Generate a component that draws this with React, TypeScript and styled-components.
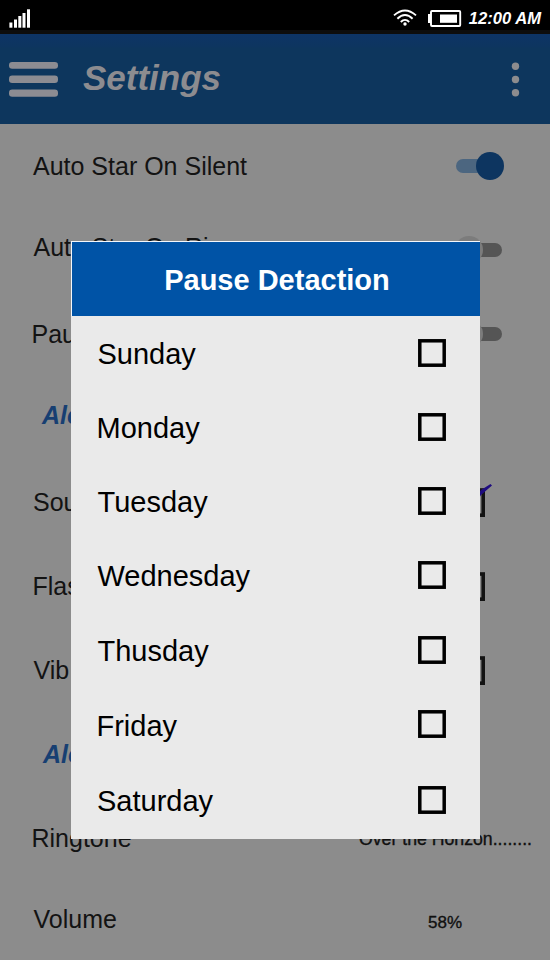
import React from 'react';
import styled, { createGlobalStyle } from 'styled-components';

const Global = createGlobalStyle`
  *, *::before, *::after { box-sizing: border-box; }
  body { margin: 0; background: #8c8c8c; font-family: 'Liberation Sans', Arial, sans-serif; }
`;

const Screen = styled.div`
  position: relative;
  width: 550px;
  height: 960px;
  overflow: hidden;
  background: #8c8c8c;
`;

const StatusBar = styled.div`
  display: flex;
  align-items: flex-start;
  justify-content: space-between;
  height: 34px;
  padding: 8px 9px 0 9px;
  background: #000;
  border-bottom: 4px solid #0d0d0d;
  svg { display: block; }
`;

const StatusGroup = styled.div`
  display: flex;
  align-items: flex-start;
  gap: 11px;
`;

const Clock = styled.span`
  margin-left: -4px;
  color: #fff;
  font: italic bold 16.6px/22px 'Liberation Sans', Arial, sans-serif;
  white-space: nowrap;
`;

const Header = styled.header`
  display: flex;
  align-items: center;
  height: 90px;
  padding: 0 30px 0 9px;
  background: linear-gradient(#0d3466 0, #0d355f 13px, #0d365d 14px);
  svg { display: block; }
`;

const Title = styled.h1`
  flex: 1;
  margin: 0 0 2px 25px;
  color: #8c8c90;
  font-size: 35px;
  line-height: 40px;
  font-style: italic;
  font-weight: bold;
`;

const List = styled.main`
  padding-top: 22px;
`;

const Row = styled.div<{ $gap: number; $left: number; $right?: number }>`
  display: flex;
  align-items: center;
  justify-content: space-between;
  height: 40px;
  margin-top: ${p => p.$gap}px;
  padding-left: ${p => p.$left}px;
  padding-right: ${p => p.$right ?? 46}px;
  svg { display: block; overflow: visible; }
`;

const Label = styled.span<{ $section?: boolean }>`
  color: ${p => (p.$section ? '#173f72' : '#131313')};
  font-size: 25px;
  line-height: 40px;
  font-weight: ${p => (p.$section ? 'bold' : 'normal')};
  font-style: ${p => (p.$section ? 'italic' : 'normal')};
  white-space: nowrap;
`;

const Value = styled.span<{ $shift: number; $size: number }>`
  padding-top: ${p => p.$shift}px;
  color: #101010;
  font-size: ${p => p.$size}px;
  -webkit-text-stroke: 0.35px #101010;
  white-space: nowrap;
`;

const Lowered = styled.div`
  padding-top: 6px;
`;

const Dialog = styled.section`
  position: absolute;
  left: 71px;
  top: 241px;
  width: 409px;
  height: 598px;
  background: #eaeaea;
`;

const DialogTitle = styled.h2`
  height: 75px;
  margin: 0;
  padding-left: 2px;
  border: solid #f4f7fb;
  border-width: 1px 0 0 1px;
  background: #0053a6;
  color: #fff;
  font-size: 29px;
  line-height: 76px;
  text-align: center;
  white-space: nowrap;
`;

const DayRow = styled.label<{ $height: number; $left: number }>`
  display: flex;
  align-items: center;
  justify-content: space-between;
  height: ${p => p.$height}px;
  padding: 0 34px 0 ${p => p.$left}px;
  svg { display: block; }
`;

const DayName = styled.span<{ $drop?: number }>`
  color: #000;
  font-size: 29px;
  line-height: 40px;
  padding-top: ${p => 2 + (p.$drop ?? 0)}px;
  white-space: nowrap;
`;

const Box = () => (
  <svg width="28" height="28">
    <rect x="1.8" y="1.8" width="24.4" height="24.4" fill="none" stroke="#000" strokeWidth="3.5" />
  </svg>
);

const DimBox = ({ checked = false }: { checked?: boolean }) => (
  <svg width="29" height="29">
    <rect x="2" y="2" width="25.2" height="25.2" fill="none" stroke="#131313" strokeWidth="3.6" />
    {checked && <path d="M5 11l8 9 12-18L34.5-4 36-2.5 25 7 13 27 3 14z" fill="#1e0c80" />}
  </svg>
);

const Toggle = ({ on = false }: { on?: boolean }) =>
  on ? (
    <svg width="48" height="28">
      <rect y="7" width="44" height="14" rx="7" fill="#4c6680" />
      <circle cx="34" cy="14" r="14" fill="#0d3560" />
    </svg>
  ) : (
    <svg width="48" height="28">
      <rect x="4" y="7" width="42" height="14" rx="7" fill="#555" />
      <circle cx="13" cy="14" r="14" fill="#7c7c7c" />
    </svg>
  );

const days = [
  { name: 'Sunday', height: 74, left: 26.5 },
  { name: 'Monday', height: 74, left: 25.5 },
  { name: 'Tuesday', height: 74, left: 26.5 },
  { name: 'Wednesday', height: 74, left: 26.5 },
  { name: 'Thusday', height: 76, left: 26.5 },
  { name: 'Friday', height: 72, left: 25.5, drop: 2 },
  { name: 'Saturday', height: 80, left: 26 },
];

export default function App() {
  return (
    <Screen>
      <Global />
      <StatusBar>
        <svg width="22" height="21" fill="#fff">
          <rect x="0.4" y="14.5" width="3" height="5.2" />
          <rect x="5" y="11.5" width="3" height="8.2" />
          <rect x="9.3" y="8" width="3" height="11.7" />
          <rect x="13.5" y="5" width="3" height="14.7" />
          <rect x="18" y="1.3" width="3" height="18.4" />
        </svg>
        <StatusGroup>
          <svg width="24" height="19" fill="none" stroke="#fff" strokeWidth="1.9">
            <path d="M1 7.4Q12 -2.5 23 7.4M4.4 10.8Q12 3.3 19.6 10.8M7.8 14Q12 9.7 16.2 14" />
            <circle cx="12" cy="16" r="1.7" fill="#fff" stroke="none" />
          </svg>
          <svg width="34" height="20">
            <rect x="3" y="3" width="29.2" height="15" rx="1" fill="none" stroke="#fff" strokeWidth="1.9" />
            <path d="M0 6h3v9H0z" fill="#fff" />
            <path d="M12 6.5h17v8.3H12z" fill="#fff" />
          </svg>
          <Clock>12:00 AM</Clock>
        </StatusGroup>
      </StatusBar>
      <Header>
        <svg width="49" height="36" fill="#8c8c92">
          <rect y="1" width="49" height="6.8" rx="3.2" />
          <rect y="14.5" width="49" height="7.4" rx="3.2" />
          <rect y="28.5" width="49" height="7.3" rx="3.2" />
        </svg>
        <Title>Settings</Title>
        <svg width="9" height="36" fill="#8c8c8e">
          <circle cx="4.5" cy="5.3" r="3.7" />
          <circle cx="4.5" cy="18.5" r="3.7" />
          <circle cx="4.5" cy="31.7" r="3.7" />
        </svg>
      </Header>
      <List>
        <Row $gap={0} $left={33}><Label>Auto Star On Silent</Label><Toggle on /></Row>
        <Row $gap={41} $left={33.5}><Label>Auto Star On Ri</Label><Lowered><Toggle /></Lowered></Row>
        <Row $gap={47} $left={31.5}><Label>Pau</Label><Toggle /></Row>
        <Row $gap={41} $left={42}><Label $section>Ale</Label></Row>
        <Row $gap={47} $left={33} $right={65}><Label>Sou</Label><DimBox checked /></Row>
        <Row $gap={44} $left={32.5} $right={65}><Label>Flas</Label><DimBox /></Row>
        <Row $gap={44} $left={33.5} $right={65}><Label>Vib</Label><DimBox /></Row>
        <Row $gap={44} $left={43}><Label $section>Ale</Label></Row>
        <Row $gap={44} $left={31.5} $right={18}><Label>Ringtone</Label><Value $shift={2} $size={17.7}>Over the Horizon........</Value></Row>
        <Row $gap={41} $left={33.5} $right={88}><Label>Volume</Label><Value $shift={7} $size={17}>58%</Value></Row>
      </List>
      <Dialog>
        <DialogTitle>Pause Detaction</DialogTitle>
        {days.map(day => (
          <DayRow key={day.name} $height={day.height} $left={day.left}>
            <DayName $drop={day.drop}>{day.name}</DayName>
            <Box />
          </DayRow>
        ))}
      </Dialog>
    </Screen>
  );
}
